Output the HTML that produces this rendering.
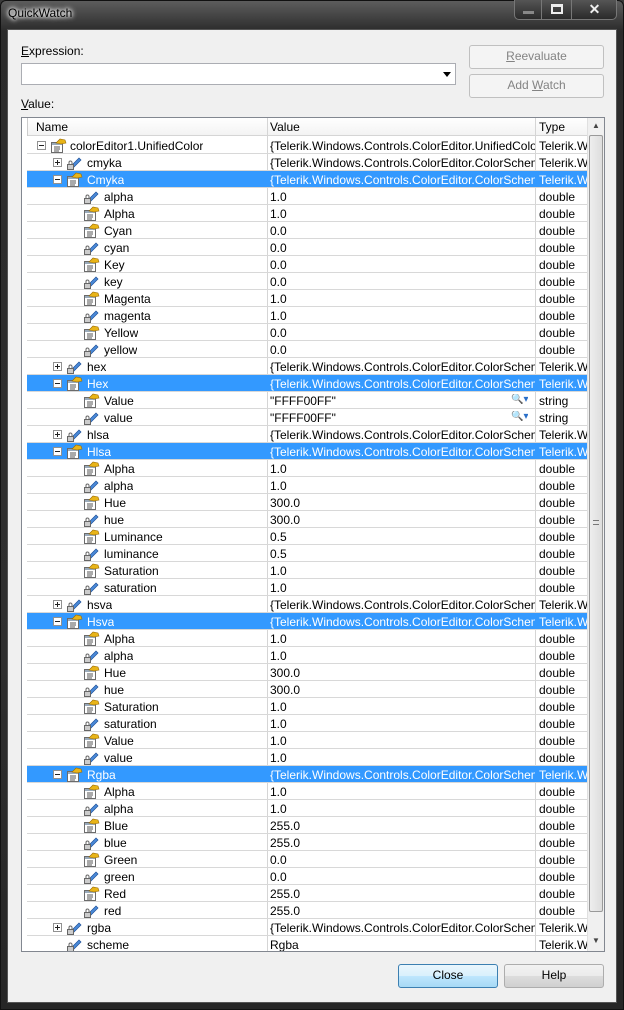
<!DOCTYPE html>
<html><head><meta charset="utf-8"><style>
*{margin:0;padding:0;box-sizing:border-box}
body{width:624px;height:1010px;overflow:hidden;background:#3a3a3a;font-family:"Liberation Sans",sans-serif;font-size:12px;position:relative}
#frame{position:absolute;left:0;top:0;width:624px;height:1010px;background:linear-gradient(180deg,#5d5d5d 0,#2b2b2b 30px,#2f2f2f 60%,#262626 100%);border:1px solid #111;border-radius:6px 6px 0 0}
#title{position:absolute;left:8px;top:6px;font-size:12px;color:#000;text-shadow:0 0 6px #fff,0 0 6px #fff,0 0 3px #fff}
#wb{position:absolute;left:514px;top:0;width:103px;height:20px;border:1px solid #777;border-top:none;border-radius:0 0 5px 5px;background:linear-gradient(#555,#2a2a2a)}
#wb div{position:absolute;top:0;height:19px;border-right:1px solid #777}
#client{position:absolute;left:7px;top:29px;width:610px;height:974px;background:#f0f0f0;border:1px solid #555}
.lbl{position:absolute;left:13px;color:#000}
#combo{position:absolute;left:13px;top:33px;width:435px;height:22px;background:#fff;border:1px solid #abadb3}
#combo:after{content:"";position:absolute;right:4px;top:8px;border:4px solid transparent;border-top:5px solid #000}
.btn{position:absolute;border:1px solid #adadad;border-radius:3px;background:linear-gradient(#f2f2f2,#ebebeb 50%,#dddddd 51%,#cfcfcf);text-align:center;line-height:21px;color:#000}
.dis{background:#f4f4f4;color:#838383;border-color:#c0c0c0}
#grid{position:absolute;left:13px;top:87px;width:584px;height:835px;background:#fff;border:1px solid #828790;overflow:hidden}
#hdr{position:absolute;left:5px;top:0;width:560px;height:18px;background:linear-gradient(#fff,#f3f3f3);border-bottom:1px solid #d5d5d5}
#hdr span{position:absolute;top:2px}
.vl{position:absolute;top:0;width:1px;background:#d5d5d5;height:835px}
.r{position:absolute;left:5px;width:560px;height:17px;border-bottom:1px solid #d8d8d8;color:#000}
.r span{position:absolute;top:2px;white-space:nowrap;overflow:hidden}
.v{left:243px;width:265px}
.t{left:512px;width:48px}
.s{background:#3399ff;color:#fff}
.e{position:absolute;top:4px;width:9px;height:9px;border:1px solid #919191;background:#fff}
.e:before{content:"";position:absolute;left:1px;top:3px;width:5px;height:1px;background:#222}
.pl:after{content:"";position:absolute;left:3px;top:1px;width:1px;height:5px;background:#222}
.ic{position:absolute;top:0;width:18px;height:17px}
#sb{position:absolute;left:565px;top:0;width:17px;height:833px;background:#f0f0f0;border-left:1px solid #e0e0e0}
#th{position:absolute;left:1px;top:17px;width:14px;height:777px;border:1px solid #999;border-radius:2px;background:linear-gradient(90deg,#eee,#ddd)}
</style></head><body>
<svg width="0" height="0" style="position:absolute"><defs>
<g id="P"><rect x="2.5" y="5.5" width="11" height="10" fill="#fff" stroke="#6b6b6b"/><rect x="3" y="6" width="10" height="2" fill="#9ab"/><path d="M5 10h6M5 12h6M5 14h5" stroke="#555"/><path d="M7 6l4-4 5 1 1 3-5 1z" fill="#e8b418" stroke="#9a6a00" stroke-width=".6"/></g>
<g id="F"><path d="M7 11l7-7 2 2-7 7z" fill="#4a8ad8" stroke="#1d4f98" stroke-width=".7"/><rect x="2.5" y="10.5" width="6" height="5" fill="#ccc" stroke="#666"/><path d="M4 10.5v-2a1.5 1.5 0 0 1 3 0v2" fill="none" stroke="#666"/></g>
</defs></svg>
<div id="frame"></div>
<div id="title">QuickWatch</div>
<div id="wb"><div style="left:0;width:27px"><i style="position:absolute;left:8px;top:11px;width:11px;height:3px;background:#888"></i></div><div style="left:27px;width:30px"><i style="position:absolute;left:9px;top:4px;width:12px;height:10px;border:2px solid #eee;border-top-width:3px"></i></div><div style="left:57px;width:45px;border:none;color:#eee;font-weight:bold;font-size:14px;text-align:center;line-height:19px">✕</div></div>
<div id="client">
<div class="lbl" style="top:14px"><u>E</u>xpression:</div>
<div id="combo"></div>
<div class="btn dis" style="left:461px;top:15px;width:135px;height:24px"><u>R</u>eevaluate</div>
<div class="btn dis" style="left:461px;top:44px;width:135px;height:24px">Add <u>W</u>atch</div>
<div class="lbl" style="top:67px"><u>V</u>alue:</div>
<div id="grid">
<div id="hdr"><span style="left:9px">Name</span><span style="left:243px">Value</span><span style="left:512px">Type</span></div>
<div class="vl" style="left:5px;height:18px;background:#ccc"></div>
<div class="vl" style="left:245px"></div><div class="vl" style="left:513px"></div>
<div style="position:absolute;left:0;top:19px;width:584px">
<div class="r" style="top:0"><i class="e" style="left:10px"></i><svg class="ic" style="left:22px"><use href="#P"/></svg><span style="left:43px">colorEditor1.UnifiedColor</span><span class="v">{Telerik.Windows.Controls.ColorEditor.UnifiedColor}</span><span class="t">Telerik.Windows</span></div>
<div class="r" style="top:17px"><i class="e pl" style="left:26px"></i><svg class="ic" style="left:38px"><use href="#F"/></svg><span style="left:60px">cmyka</span><span class="v">{Telerik.Windows.Controls.ColorEditor.ColorSchemes}</span><span class="t">Telerik.Windows</span></div>
<div class="r s" style="top:34px"><i class="e" style="left:26px"></i><svg class="ic" style="left:38px"><use href="#P"/></svg><span style="left:60px">Cmyka</span><span class="v">{Telerik.Windows.Controls.ColorEditor.ColorSchemes}</span><span class="t">Telerik.Windows</span></div>
<div class="r" style="top:51px"><svg class="ic" style="left:55px"><use href="#F"/></svg><span style="left:77px">alpha</span><span class="v">1.0</span><span class="t">double</span></div>
<div class="r" style="top:68px"><svg class="ic" style="left:55px"><use href="#P"/></svg><span style="left:77px">Alpha</span><span class="v">1.0</span><span class="t">double</span></div>
<div class="r" style="top:85px"><svg class="ic" style="left:55px"><use href="#P"/></svg><span style="left:77px">Cyan</span><span class="v">0.0</span><span class="t">double</span></div>
<div class="r" style="top:102px"><svg class="ic" style="left:55px"><use href="#F"/></svg><span style="left:77px">cyan</span><span class="v">0.0</span><span class="t">double</span></div>
<div class="r" style="top:119px"><svg class="ic" style="left:55px"><use href="#P"/></svg><span style="left:77px">Key</span><span class="v">0.0</span><span class="t">double</span></div>
<div class="r" style="top:136px"><svg class="ic" style="left:55px"><use href="#F"/></svg><span style="left:77px">key</span><span class="v">0.0</span><span class="t">double</span></div>
<div class="r" style="top:153px"><svg class="ic" style="left:55px"><use href="#P"/></svg><span style="left:77px">Magenta</span><span class="v">1.0</span><span class="t">double</span></div>
<div class="r" style="top:170px"><svg class="ic" style="left:55px"><use href="#F"/></svg><span style="left:77px">magenta</span><span class="v">1.0</span><span class="t">double</span></div>
<div class="r" style="top:187px"><svg class="ic" style="left:55px"><use href="#P"/></svg><span style="left:77px">Yellow</span><span class="v">0.0</span><span class="t">double</span></div>
<div class="r" style="top:204px"><svg class="ic" style="left:55px"><use href="#F"/></svg><span style="left:77px">yellow</span><span class="v">0.0</span><span class="t">double</span></div>
<div class="r" style="top:221px"><i class="e pl" style="left:26px"></i><svg class="ic" style="left:38px"><use href="#F"/></svg><span style="left:60px">hex</span><span class="v">{Telerik.Windows.Controls.ColorEditor.ColorSchemes}</span><span class="t">Telerik.Windows</span></div>
<div class="r s" style="top:238px"><i class="e" style="left:26px"></i><svg class="ic" style="left:38px"><use href="#P"/></svg><span style="left:60px">Hex</span><span class="v">{Telerik.Windows.Controls.ColorEditor.ColorSchemes}</span><span class="t">Telerik.Windows</span></div>
<div class="r" style="top:255px"><svg class="ic" style="left:55px"><use href="#P"/></svg><span style="left:77px">Value</span><span class="v">"FFFF00FF"</span><span style="left:484px;color:#2a6fc9;font-size:10px">🔍▾</span><span class="t">string</span></div>
<div class="r" style="top:272px"><svg class="ic" style="left:55px"><use href="#F"/></svg><span style="left:77px">value</span><span class="v">"FFFF00FF"</span><span style="left:484px;color:#2a6fc9;font-size:10px">🔍▾</span><span class="t">string</span></div>
<div class="r" style="top:289px"><i class="e pl" style="left:26px"></i><svg class="ic" style="left:38px"><use href="#F"/></svg><span style="left:60px">hlsa</span><span class="v">{Telerik.Windows.Controls.ColorEditor.ColorSchemes}</span><span class="t">Telerik.Windows</span></div>
<div class="r s" style="top:306px"><i class="e" style="left:26px"></i><svg class="ic" style="left:38px"><use href="#P"/></svg><span style="left:60px">Hlsa</span><span class="v">{Telerik.Windows.Controls.ColorEditor.ColorSchemes}</span><span class="t">Telerik.Windows</span></div>
<div class="r" style="top:323px"><svg class="ic" style="left:55px"><use href="#P"/></svg><span style="left:77px">Alpha</span><span class="v">1.0</span><span class="t">double</span></div>
<div class="r" style="top:340px"><svg class="ic" style="left:55px"><use href="#F"/></svg><span style="left:77px">alpha</span><span class="v">1.0</span><span class="t">double</span></div>
<div class="r" style="top:357px"><svg class="ic" style="left:55px"><use href="#P"/></svg><span style="left:77px">Hue</span><span class="v">300.0</span><span class="t">double</span></div>
<div class="r" style="top:374px"><svg class="ic" style="left:55px"><use href="#F"/></svg><span style="left:77px">hue</span><span class="v">300.0</span><span class="t">double</span></div>
<div class="r" style="top:391px"><svg class="ic" style="left:55px"><use href="#P"/></svg><span style="left:77px">Luminance</span><span class="v">0.5</span><span class="t">double</span></div>
<div class="r" style="top:408px"><svg class="ic" style="left:55px"><use href="#F"/></svg><span style="left:77px">luminance</span><span class="v">0.5</span><span class="t">double</span></div>
<div class="r" style="top:425px"><svg class="ic" style="left:55px"><use href="#P"/></svg><span style="left:77px">Saturation</span><span class="v">1.0</span><span class="t">double</span></div>
<div class="r" style="top:442px"><svg class="ic" style="left:55px"><use href="#F"/></svg><span style="left:77px">saturation</span><span class="v">1.0</span><span class="t">double</span></div>
<div class="r" style="top:459px"><i class="e pl" style="left:26px"></i><svg class="ic" style="left:38px"><use href="#F"/></svg><span style="left:60px">hsva</span><span class="v">{Telerik.Windows.Controls.ColorEditor.ColorSchemes}</span><span class="t">Telerik.Windows</span></div>
<div class="r s" style="top:476px"><i class="e" style="left:26px"></i><svg class="ic" style="left:38px"><use href="#P"/></svg><span style="left:60px">Hsva</span><span class="v">{Telerik.Windows.Controls.ColorEditor.ColorSchemes}</span><span class="t">Telerik.Windows</span></div>
<div class="r" style="top:493px"><svg class="ic" style="left:55px"><use href="#P"/></svg><span style="left:77px">Alpha</span><span class="v">1.0</span><span class="t">double</span></div>
<div class="r" style="top:510px"><svg class="ic" style="left:55px"><use href="#F"/></svg><span style="left:77px">alpha</span><span class="v">1.0</span><span class="t">double</span></div>
<div class="r" style="top:527px"><svg class="ic" style="left:55px"><use href="#P"/></svg><span style="left:77px">Hue</span><span class="v">300.0</span><span class="t">double</span></div>
<div class="r" style="top:544px"><svg class="ic" style="left:55px"><use href="#F"/></svg><span style="left:77px">hue</span><span class="v">300.0</span><span class="t">double</span></div>
<div class="r" style="top:561px"><svg class="ic" style="left:55px"><use href="#P"/></svg><span style="left:77px">Saturation</span><span class="v">1.0</span><span class="t">double</span></div>
<div class="r" style="top:578px"><svg class="ic" style="left:55px"><use href="#F"/></svg><span style="left:77px">saturation</span><span class="v">1.0</span><span class="t">double</span></div>
<div class="r" style="top:595px"><svg class="ic" style="left:55px"><use href="#P"/></svg><span style="left:77px">Value</span><span class="v">1.0</span><span class="t">double</span></div>
<div class="r" style="top:612px"><svg class="ic" style="left:55px"><use href="#F"/></svg><span style="left:77px">value</span><span class="v">1.0</span><span class="t">double</span></div>
<div class="r s" style="top:629px"><i class="e" style="left:26px"></i><svg class="ic" style="left:38px"><use href="#P"/></svg><span style="left:60px">Rgba</span><span class="v">{Telerik.Windows.Controls.ColorEditor.ColorSchemes}</span><span class="t">Telerik.Windows</span></div>
<div class="r" style="top:646px"><svg class="ic" style="left:55px"><use href="#P"/></svg><span style="left:77px">Alpha</span><span class="v">1.0</span><span class="t">double</span></div>
<div class="r" style="top:663px"><svg class="ic" style="left:55px"><use href="#F"/></svg><span style="left:77px">alpha</span><span class="v">1.0</span><span class="t">double</span></div>
<div class="r" style="top:680px"><svg class="ic" style="left:55px"><use href="#P"/></svg><span style="left:77px">Blue</span><span class="v">255.0</span><span class="t">double</span></div>
<div class="r" style="top:697px"><svg class="ic" style="left:55px"><use href="#F"/></svg><span style="left:77px">blue</span><span class="v">255.0</span><span class="t">double</span></div>
<div class="r" style="top:714px"><svg class="ic" style="left:55px"><use href="#P"/></svg><span style="left:77px">Green</span><span class="v">0.0</span><span class="t">double</span></div>
<div class="r" style="top:731px"><svg class="ic" style="left:55px"><use href="#F"/></svg><span style="left:77px">green</span><span class="v">0.0</span><span class="t">double</span></div>
<div class="r" style="top:748px"><svg class="ic" style="left:55px"><use href="#P"/></svg><span style="left:77px">Red</span><span class="v">255.0</span><span class="t">double</span></div>
<div class="r" style="top:765px"><svg class="ic" style="left:55px"><use href="#F"/></svg><span style="left:77px">red</span><span class="v">255.0</span><span class="t">double</span></div>
<div class="r" style="top:782px"><i class="e pl" style="left:26px"></i><svg class="ic" style="left:38px"><use href="#F"/></svg><span style="left:60px">rgba</span><span class="v">{Telerik.Windows.Controls.ColorEditor.ColorSchemes}</span><span class="t">Telerik.Windows</span></div>
<div class="r" style="top:799px"><svg class="ic" style="left:38px"><use href="#F"/></svg><span style="left:60px">scheme</span><span class="v">Rgba</span><span class="t">Telerik.Windows</span></div>
</div>
<div id="sb"><span style="position:absolute;left:4px;top:3px;font-size:8px;color:#444">▲</span><div id="th"><i style="position:absolute;left:3px;top:384px;width:6px;height:5px;border-top:1px solid #777;border-bottom:1px solid #777"></i></div><span style="position:absolute;left:4px;top:818px;font-size:8px;color:#444">▼</span></div>
</div>
<div class="btn" style="left:390px;top:934px;width:100px;height:24px;border-color:#3c7fb1;background:linear-gradient(#eaf6fd,#d9f0fc 50%,#bee6fd 51%,#a7d9f5)">Close</div>
<div class="btn" style="left:496px;top:934px;width:100px;height:24px">Help</div>
</div>
</body></html>
